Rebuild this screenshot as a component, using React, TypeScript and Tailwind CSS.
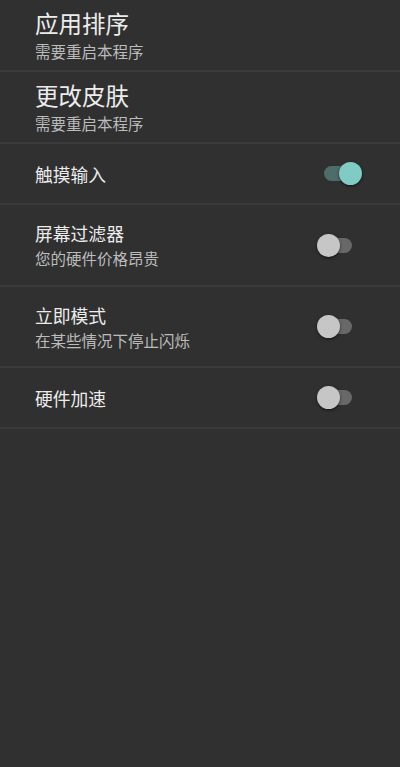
import React, { useState } from "react";

type Item = {
  title: string;
  subtitle?: string;
  large?: boolean;
  toggle?: boolean;
  on?: boolean;
  height: string;
};

const items: Item[] = [
  { title: "应用排序", subtitle: "需要重启本程序", large: true, height: "h-[72px]" },
  { title: "更改皮肤", subtitle: "需要重启本程序", large: true, height: "h-[72px]" },
  { title: "触摸输入", toggle: true, on: true, height: "h-[61px]" },
  { title: "屏幕过滤器", subtitle: "您的硬件价格昂贵", toggle: true, height: "h-[82px]" },
  { title: "立即模式", subtitle: "在某些情况下停止闪烁", toggle: true, height: "h-[81px]" },
  { title: "硬件加速", toggle: true, height: "h-[61px]" },
];

function Switch({ checked, onChange }: { checked: boolean; onChange: () => void }) {
  return (
    <button className="relative h-[23px] w-[45px] shrink-0" onClick={onChange} type="button">
      <span
        className={
          checked
            ? "absolute left-[7px] top-[4px] h-[15px] w-[28px] rounded-full bg-[#4d6d6a]"
            : "absolute left-[7px] top-[4px] h-[15px] w-[28px] rounded-full bg-[#686868]"
        }
      />
      <span
        className={
          checked
            ? "absolute right-0 top-0 h-[23px] w-[23px] rounded-full bg-[#80cbc4] shadow-[0_1px_3px_rgba(0,0,0,0.6)]"
            : "absolute left-0 top-0 h-[23px] w-[23px] rounded-full bg-[#c6c6c6] shadow-[0_1px_3px_rgba(0,0,0,0.6)]"
        }
      />
    </button>
  );
}

export default function App() {
  const [state, setState] = useState<boolean[]>(items.map((item) => !!item.on));

  return (
    <div
      className="h-[767px] w-[400px] overflow-hidden bg-[#303030]"
      style={{ fontFamily: '"Noto Sans CJK SC", "Noto Sans", sans-serif' }}
    >
      {items.map((item, i) => (
        <div
          className={`${item.height} flex items-center justify-between border-b-2 border-[#3a3a3a] pl-[35px] pr-[38px]`}
          key={item.title}
        >
          <div className="flex flex-col gap-[4px]">
            <div
              className={
                item.large
                  ? "text-[23.5px] leading-[28px] text-[#ececec]"
                  : "text-[17.8px] leading-[22px] text-[#ececec]"
              }
            >
              {item.title}
            </div>
            {item.subtitle ? (
              <div className="text-[15.5px] leading-[20px] text-[#bcbcbc]">{item.subtitle}</div>
            ) : null}
          </div>
          {item.toggle ? (
            <Switch
              checked={state[i]}
              onChange={() => setState(state.map((v, j) => (j === i ? !v : v)))}
            />
          ) : null}
        </div>
      ))}
    </div>
  );
}
